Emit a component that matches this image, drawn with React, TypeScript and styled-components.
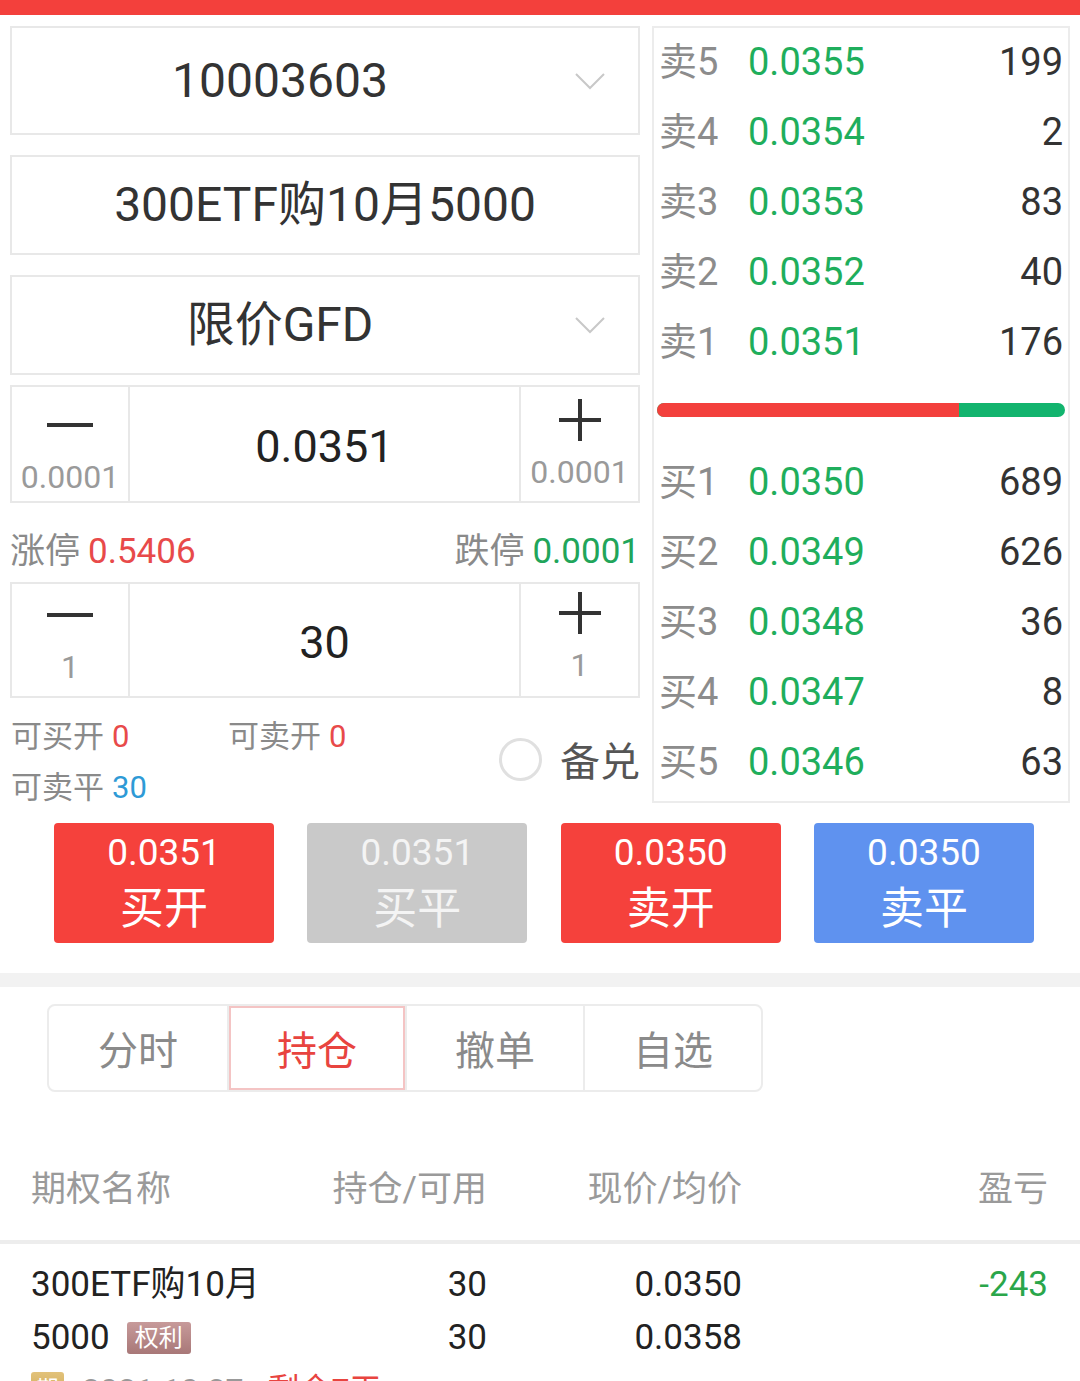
import React from "react";
import styled, { createGlobalStyle } from "styled-components";

const GlobalStyle = createGlobalStyle`
  html, body { margin: 0; padding: 0; background: #fff; }
  body { font-family: Roboto, "Noto Sans CJK SC", "Noto Sans", sans-serif; color: #333; }
  * { box-sizing: border-box; }
`;

const Page = styled.div`
  width: 1080px;
  height: 1381px;
  overflow: hidden;
  background: #fff;
`;

const TopBar = styled.div`
  height: 15px;
  background: #f3403c;
`;

const TradeArea = styled.div`
  display: flex;
  gap: 12px;
  padding: 11px 10px 0 10px;
`;

const LeftCol = styled.div`
  width: 630px;
  display: flex;
  flex-direction: column;
`;

const SelectBox = styled.div<{ $h: number; $mt: number }>`
  height: ${(p) => p.$h}px;
  margin-top: ${(p) => p.$mt}px;
  border: 2px solid #e8e8e8;
  display: flex;
  align-items: center;
`;

const SelectText = styled.div`
  flex: 1;
  text-align: center;
  font-size: 48px;
  line-height: 1;
  color: #333;
`;

const ChevronSlot = styled.div`
  width: 90px;
  display: flex;
  justify-content: center;
  padding-right: 6px;
`;

const Stepper = styled.div<{ $h: number; $mt: number }>`
  height: ${(p) => p.$h}px;
  margin-top: ${(p) => p.$mt}px;
  border: 2px solid #e8e8e8;
  display: grid;
  grid-template-columns: 118px 1fr 119px;
`;

const StepSide = styled.div<{ $side: "left" | "right"; $pt: number }>`
  display: flex;
  flex-direction: column;
  align-items: center;
  padding-top: ${(p) => p.$pt}px;
  ${(p) => (p.$side === "left" ? "border-right" : "border-left")}: 2px solid #e8e8e8;
`;

const IconSlot = styled.div`
  height: 44px;
  display: flex;
  align-items: center;
  justify-content: center;
`;

const StepSmall = styled.div`
  margin-top: 12px;
  font-size: 32px;
  line-height: 36px;
  color: #9a9a9a;
`;

const StepValue = styled.div`
  display: flex;
  align-items: center;
  justify-content: center;
  padding-top: 4px;
  font-size: 45px;
  color: #222;
`;

const LimitRow = styled.div`
  height: 79px;
  display: flex;
  justify-content: space-between;
  align-items: flex-end;
  padding-bottom: 10px;
  font-size: 35px;
  line-height: 40px;
`;

const Label = styled.span`
  color: #8a8a8a;
  margin-right: 8px;
`;

const Val = styled.span<{ $c: string }>`
  color: ${(p) => p.$c};
`;

const AvailArea = styled.div`
  height: 112px;
  display: flex;
  justify-content: space-between;
  padding-top: 10px;
`;

const AvailGrid = styled.div`
  display: grid;
  grid-template-columns: 217px 200px;
  grid-auto-rows: 51px;
  align-items: center;
  font-size: 31px;
  padding-left: 1px;
`;

const AvailItem = styled.div`
  white-space: nowrap;
`;

const Cover = styled.div`
  display: flex;
  align-items: center;
  gap: 18px;
  height: 70px;
  margin-top: 16px;
`;

const Radio = styled.div`
  width: 43px;
  height: 43px;
  border-radius: 50%;
  border: 3px solid #e0e0e0;
`;

const CoverText = styled.span`
  font-size: 40px;
  color: #555;
`;

const Book = styled.div`
  flex: 1;
  height: 777px;
  border: 2px solid #ececec;
  padding: 0 5px 3px 5px;
  display: flex;
  flex-direction: column;
`;

const BookRow = styled.div`
  height: 70px;
  display: grid;
  grid-template-columns: 89px auto 1fr;
  align-items: center;
  font-size: 38px;
  line-height: 1;
  padding-bottom: 3px;
`;

const BookLabel = styled.span`
  color: #8c8c8c;
`;

const BookPrice = styled.span`
  color: #1fae5c;
`;

const BookVol = styled.span`
  color: #333;
  text-align: right;
`;

const BarSection = styled.div`
  height: 70px;
  display: flex;
  align-items: center;
  padding-bottom: 6px;
  margin: 0 -2px;
`;

const Bar = styled.div`
  flex: 1;
  height: 14px;
  border-radius: 7px;
  overflow: hidden;
  display: flex;
  background: #12b46e;
`;

const BarBuy = styled.div`
  height: 100%;
  background: #f3403c;
`;

const ButtonRow = styled.div`
  margin-top: 13px;
  padding: 0 46px 0 54px;
  display: flex;
  justify-content: space-between;
`;

const ActionButton = styled.div<{ $bg: string; $fg: string }>`
  width: 220px;
  height: 120px;
  border-radius: 4px;
  background: ${(p) => p.$bg};
  color: ${(p) => p.$fg};
  display: flex;
  flex-direction: column;
  align-items: center;
  justify-content: center;
  padding-top: 4px;
`;

const BtnPrice = styled.div`
  font-size: 37px;
  line-height: 46px;
`;

const BtnLabel = styled.div`
  font-size: 44px;
  line-height: 62px;
  margin-top: 2px;
`;

const Band = styled.div`
  margin-top: 30px;
  height: 14px;
  background: #f2f2f2;
`;

const TabsWrap = styled.div`
  padding: 17px 0 0 47px;
`;

const Tabs = styled.div`
  width: 716px;
  height: 88px;
  border: 2px solid #ececec;
  border-radius: 8px;
  display: grid;
  grid-template-columns: repeat(4, 1fr);
  overflow: hidden;
`;

const Tab = styled.div<{ $active: boolean; $first: boolean }>`
  display: flex;
  align-items: center;
  justify-content: center;
  font-size: 40px;
  color: ${(p) => (p.$active ? "#e8443f" : "#8a8a8a")};
  border-left: ${(p) => (p.$first ? "none" : "2px solid #ececec")};
  box-shadow: ${(p) => (p.$active ? "inset 0 0 0 2px #f4c4c4" : "none")};
`;

const TableGrid = styled.div`
  display: grid;
  grid-template-columns: 270px 186px 255px 1fr;
  padding: 0 32px 0 31px;
`;

const TableHead = styled(TableGrid)`
  padding-top: 73px;
  padding-bottom: 25px;
  border-bottom: 4px solid #ededed;
  font-size: 35px;
  line-height: 50px;
  color: #9a9a9a;
`;

const HeadCell = styled.div<{ $right?: boolean }>`
  text-align: ${(p) => (p.$right ? "right" : "left")};
  white-space: nowrap;
`;

const TableBody = styled(TableGrid)`
  padding-top: 14px;
  font-size: 35px;
  line-height: 53px;
  color: #222;
`;

const Cell = styled.div<{ $right?: boolean; $c?: string }>`
  text-align: ${(p) => (p.$right ? "right" : "left")};
  color: ${(p) => p.$c ?? "#222"};
  white-space: nowrap;
`;

const NameLine = styled.div`
  display: flex;
  align-items: center;
`;

const RightBadge = styled.span`
  margin-left: 17px;
  width: 64px;
  height: 32px;
  border-radius: 3px;
  background: linear-gradient(180deg, #c79a9a, #a87878);
  color: #fff;
  font-size: 24px;
  line-height: 32px;
  text-align: center;
`;

const DateLine = styled.div`
  margin-top: 6px;
  padding-left: 31px;
  display: flex;
  align-items: flex-start;
  gap: 18px;
  height: 40px;
  font-size: 32px;
  line-height: 40px;
`;

const ExpBadge = styled.span`
  width: 33px;
  height: 33px;
  margin-top: 2px;
  border-radius: 3px;
  background: linear-gradient(180deg, #e2c27a, #c9a24e);
  color: #fff;
  font-size: 22px;
  line-height: 33px;
  text-align: center;
`;

const DateText = styled.span`
  color: #999;
`;

const RemainText = styled.span`
  color: #e8443f;
  margin-left: 6px;
`;

const Chevron = () => (
  <svg width="32" height="18" viewBox="0 0 32 18">
    <polyline points="2,2 16,16 30,2" fill="none" stroke="#c8c8c8" strokeWidth="2" />
  </svg>
);

const MinusIcon = () => (
  <svg width="46" height="6" viewBox="0 0 46 6">
    <rect x="0" y="1" width="46" height="4" fill="#333" />
  </svg>
);

const PlusIcon = () => (
  <svg width="42" height="42" viewBox="0 0 42 42">
    <rect x="0" y="19" width="42" height="4" fill="#333" />
    <rect x="19" y="0" width="4" height="42" fill="#333" />
  </svg>
);

const sells = [
  { l: "卖5", p: "0.0355", v: 199 },
  { l: "卖4", p: "0.0354", v: 2 },
  { l: "卖3", p: "0.0353", v: 83 },
  { l: "卖2", p: "0.0352", v: 40 },
  { l: "卖1", p: "0.0351", v: 176 },
];
const buys = [
  { l: "买1", p: "0.0350", v: 689 },
  { l: "买2", p: "0.0349", v: 626 },
  { l: "买3", p: "0.0348", v: 36 },
  { l: "买4", p: "0.0347", v: 8 },
  { l: "买5", p: "0.0346", v: 63 },
];

const actions = [
  { p: "0.0351", l: "买开", bg: "#f5413c", fg: "#fff" },
  { p: "0.0351", l: "买平", bg: "#c9c9c9", fg: "#f4f4f4" },
  { p: "0.0350", l: "卖开", bg: "#f5413c", fg: "#fff" },
  { p: "0.0350", l: "卖平", bg: "#5f92ef", fg: "#fff" },
];

const tabs = ["分时", "持仓", "撤单", "自选"];

export default function App() {
  const buyTotal = buys.reduce((s, b) => s + b.v, 0);
  const sellTotal = sells.reduce((s, b) => s + b.v, 0);
  const buyPct = (buyTotal / (buyTotal + sellTotal)) * 100;

  return (
    <Page>
      <GlobalStyle />
      <TopBar />
      <TradeArea>
        <LeftCol>
          <SelectBox $h={109} $mt={0}>
            <SelectText>10003603</SelectText>
            <ChevronSlot>
              <Chevron />
            </ChevronSlot>
          </SelectBox>
          <SelectBox $h={100} $mt={20}>
            <SelectText>300ETF购10月5000</SelectText>
          </SelectBox>
          <SelectBox $h={100} $mt={20}>
            <SelectText>限价GFD</SelectText>
            <ChevronSlot>
              <Chevron />
            </ChevronSlot>
          </SelectBox>
          <Stepper $h={118} $mt={10}>
            <StepSide $side="left" $pt={16}>
              <IconSlot>
                <MinusIcon />
              </IconSlot>
              <StepSmall>0.0001</StepSmall>
            </StepSide>
            <StepValue>0.0351</StepValue>
            <StepSide $side="right" $pt={11}>
              <IconSlot>
                <PlusIcon />
              </IconSlot>
              <StepSmall>0.0001</StepSmall>
            </StepSide>
          </Stepper>
          <LimitRow>
            <div>
              <Label>涨停</Label>
              <Val $c="#e84a4a">0.5406</Val>
            </div>
            <div>
              <Label>跌停</Label>
              <Val $c="#21a55a">0.0001</Val>
            </div>
          </LimitRow>
          <Stepper $h={116} $mt={0}>
            <StepSide $side="left" $pt={9}>
              <IconSlot>
                <MinusIcon />
              </IconSlot>
              <StepSmall>1</StepSmall>
            </StepSide>
            <StepValue>30</StepValue>
            <StepSide $side="right" $pt={7}>
              <IconSlot>
                <PlusIcon />
              </IconSlot>
              <StepSmall>1</StepSmall>
            </StepSide>
          </Stepper>
          <AvailArea>
            <AvailGrid>
              <AvailItem>
                <Label>可买开</Label>
                <Val $c="#e84a4a">0</Val>
              </AvailItem>
              <AvailItem>
                <Label>可卖开</Label>
                <Val $c="#e84a4a">0</Val>
              </AvailItem>
              <AvailItem>
                <Label>可卖平</Label>
                <Val $c="#2e9ad6">30</Val>
              </AvailItem>
            </AvailGrid>
            <Cover>
              <Radio />
              <CoverText>备兑</CoverText>
            </Cover>
          </AvailArea>
        </LeftCol>
        <Book>
          {sells.map((r) => (
            <BookRow key={r.l}>
              <BookLabel>{r.l}</BookLabel>
              <BookPrice>{r.p}</BookPrice>
              <BookVol>{r.v}</BookVol>
            </BookRow>
          ))}
          <BarSection>
            <Bar>
              <BarBuy style={{ width: `${buyPct}%` }} />
            </Bar>
          </BarSection>
          {buys.map((r) => (
            <BookRow key={r.l}>
              <BookLabel>{r.l}</BookLabel>
              <BookPrice>{r.p}</BookPrice>
              <BookVol>{r.v}</BookVol>
            </BookRow>
          ))}
        </Book>
      </TradeArea>
      <ButtonRow>
        {actions.map((a) => (
          <ActionButton key={a.l} $bg={a.bg} $fg={a.fg}>
            <BtnPrice>{a.p}</BtnPrice>
            <BtnLabel>{a.l}</BtnLabel>
          </ActionButton>
        ))}
      </ButtonRow>
      <Band />
      <TabsWrap>
        <Tabs>
          {tabs.map((t, i) => (
            <Tab key={t} $active={i === 1} $first={i === 0}>
              {t}
            </Tab>
          ))}
        </Tabs>
      </TabsWrap>
      <TableHead>
        <HeadCell>期权名称</HeadCell>
        <HeadCell $right>持仓/可用</HeadCell>
        <HeadCell $right>现价/均价</HeadCell>
        <HeadCell $right>盈亏</HeadCell>
      </TableHead>
      <TableBody>
        <Cell>
          <NameLine>300ETF购10月</NameLine>
          <NameLine>
            5000<RightBadge>权利</RightBadge>
          </NameLine>
        </Cell>
        <Cell $right>
          <div>30</div>
          <div>30</div>
        </Cell>
        <Cell $right>
          <div>0.0350</div>
          <div>0.0358</div>
        </Cell>
        <Cell $right $c="#2aa64a">
          <div>-243</div>
        </Cell>
      </TableBody>
      <DateLine>
        <ExpBadge>期</ExpBadge>
        <DateText>2021-10-27</DateText>
        <RemainText>剩余7天</RemainText>
      </DateLine>
    </Page>
  );
}
